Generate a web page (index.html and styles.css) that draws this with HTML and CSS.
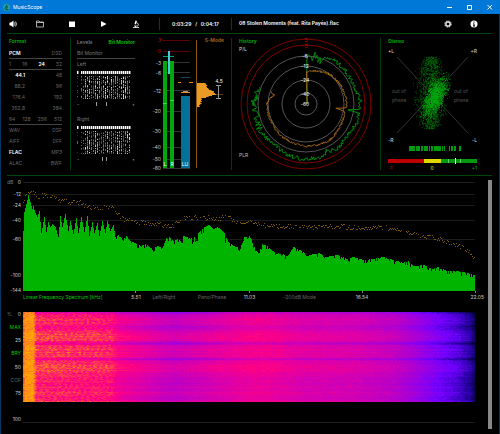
FILE: index.html
```html
<!DOCTYPE html>
<html lang="en">
<head>
  <meta charset="UTF-8">
  <meta name="viewport" content="width=device-width, initial-scale=1.0">
  <title>MusicScope</title>
  <link rel="stylesheet" href="styles.css">
</head>
<body>
  <div class="window">
    <header class="titlebar">
      <svg class="logo" viewBox="0 0 16 16"><circle cx="8" cy="8" r="8" fill="#1fa59a"/><path d="M3 10l3-1 2-6 2 4-2 3 3 3M5 13h7" fill="none" stroke="#083c50" stroke-width="2"/></svg>
      <h1>MusicScope</h1>
      <button class="win-btn" aria-label="Minimize"><svg viewBox="0 0 6 6"><path d="M0 3.500h5"/></svg></button>
      <button class="win-btn" aria-label="Maximize"><svg viewBox="0 0 6 6"><path d="M.5 1.500h4v4h-4z"/></svg></button>
      <button class="win-btn" aria-label="Close"><svg viewBox="0 0 6 6"><path d="M.5 1l4.500 4.500M5 1L.5 5.500"/></svg></button>
    </header>

    <main>
      <div class="toolbar">
        <button class="tool tool-first" aria-label="Volume"><svg viewBox="0 0 16 16"><path d="M1 5h3l5-4v14l-5-4H1z" fill="#fff"/><path d="M11 5q2 3 0 6M13 3q4 5 0 10" fill="none" stroke="#fff" stroke-width="1.500"/></svg></button>
        <button class="tool" aria-label="Open"><svg viewBox="0 0 16 16"><path d="M1 14V2h5l2 2h7v10zM1 5h14" fill="none" stroke="#ddd" stroke-width="1.500"/></svg></button>
        <button class="tool" aria-label="Stop"><svg viewBox="0 0 16 16"><path d="M2 3h12v11H2z" fill="#fff"/></svg></button>
        <button class="tool" aria-label="Play"><svg viewBox="0 0 16 16"><path d="M2 2l11 6-11 6z" fill="#fff"/></svg></button>
        <button class="tool" aria-label="Analyze"><svg viewBox="0 0 16 16"><path d="M7 1l3 1-2 7-3-1z" fill="#fff"/><path d="M10 5q5 3 1 8M2 15h12M4 12h6M7 12v3" fill="none" stroke="#fff" stroke-width="1.600"/></svg></button>
        <p class="time">0:03:29 &nbsp; / &nbsp; 0:04:17</p>
        <p class="file">08 Stolen Moments (feat. Rita Payés).flac</p>
        <button class="tool tool-small" aria-label="Settings"><svg viewBox="0 0 16 16"><circle cx="8" cy="8" r="5.500" fill="none" stroke="#ddd" stroke-width="3.500" stroke-dasharray="2.800 1.520"/><circle cx="8" cy="8" r="4" fill="none" stroke="#ddd" stroke-width="2.500"/></svg></button>
        <button class="tool tool-small" aria-label="Info"><svg viewBox="0 0 16 16"><circle cx="8" cy="8" r="7" fill="#fff"/><path d="M8 3v2.500M6.500 7.500H8V12M6 12h4" fill="none" stroke="#000" stroke-width="2"/></svg></button>
      </div>

      <div class="panels">
        <section class="panel format">
          <h2>Format</h2>
          <ul class="pair line"><li class="on">PCM</li><li>DSD</li></ul>
          <ul class="pair line"><li>1</li><li>16</li><li class="on">24</li><li>32</li></ul>
          <ul class="pair rate"><li class="on">44.1</li><li>48</li></ul>
          <ul class="pair rate"><li>88.2</li><li>96</li></ul>
          <ul class="pair rate"><li>176.4</li><li>192</li></ul>
          <ul class="pair rate"><li>352.8</li><li>384</li></ul>
          <ul class="pair line"><li>64</li><li>128</li><li>256</li><li>512</li></ul>
          <ul class="pair"><li>WAV</li><li>DSF</li></ul>
          <ul class="pair"><li>AIFF</li><li>DFF</li></ul>
          <ul class="pair"><li class="on">FLAC</li><li>MP3</li></ul>
          <ul class="pair"><li>ALAC</li><li>BWF</li></ul>
        </section>

        <section class="panel levels">
          <div class="tabs"><button>Levels</button><button class="green">Bit Monitor</button></div>
          <p class="line">Bit Monitor</p>
          <p>Left</p>
          <canvas class="bits" width="58" height="29"></canvas>
          <svg class="bit-ticks" viewBox="0 0 58 11"><text x="0" y="5">-</text><path d="M19.500 3v4M29.500 3v4"/><text x="58" y="5" text-anchor="end">+</text></svg>
          <p>Right</p>
          <canvas class="bits" width="58" height="29"></canvas>
          <svg class="bit-ticks" viewBox="0 0 58 11"><text x="0" y="5">-</text><path d="M25.500 3v4M29.500 3v4"/><text x="58" y="5" text-anchor="end">+</text></svg>
        </section>

        <section class="panel meter">
          <button class="s-mode">S-Mode</button>
          <svg id="meter" viewBox="0 0 82 138">
            <g class="crisp">
              <path d="M13 4.500h27M13 15.500h27" stroke="#5c0000"/>
              <path d="M13 26.500h27M13 36.500h27M13 54.500h27M13 75.500h27M13 95.500h27M13 111.500h27M13 123.500h27M13 132.500h27" stroke="#333"/>
              <path d="M13 25h4v107h-4zM20 25h4v107h-4z" fill="#00a80c"/>
              <path d="M13 67.500h4M20 64.500h4" stroke="#3ce53c"/>
              <path d="M13 20.500h11" stroke="#00a060"/>
              <path d="M18 15h2v23h-2z" fill="#4cc8e0"/>
              <path d="M31 60h9v72h-9z" fill="#03709a"/>
              <path d="M31 41.500h9" stroke="#07506e"/>
              <path d="M33 55.500h5" stroke="#999"/>
              <path d="M31 56.500h9M28 46.500h3M39 46.500h4" stroke="#e58d1a"/>
              <path d="M46.500 4v128" stroke="#8f5c12"/>
              <path d="M65 58.500h8" stroke="#5c3b0c"/>
              <path d="M66 49.500h5M66 62.500h5M68.500 49v14" stroke="#999"/>
            </g>
            <path id="histogram" fill="#eb9a26"/>
            <text x="69" y="45" text-anchor="middle" fill="#fff">4.5</text>
            <text x="15" y="128" text-anchor="middle" fill="#fff">L</text>
            <text x="22" y="128" text-anchor="middle" fill="#fff">R</text>
            <text x="35" y="128" text-anchor="middle" fill="#fff">LU</text>
          </svg>
        </section>

        <section class="panel history">
          <h2 class="over">History</h2>
          <svg id="history" viewBox="0 0 149 138">
            <g fill="none">
              <circle cx="74" cy="68" r="65" stroke="#820000"/>
              <circle cx="74" cy="68" r="59" stroke="#820000"/>
              <circle cx="74" cy="68" r="48" stroke="#555"/>
              <circle cx="74" cy="68" r="38" stroke="#555"/>
              <circle cx="74" cy="68" r="24" stroke="#555"/>
              <circle cx="74" cy="68" r="11" stroke="#555"/>
              <path id="trace-peak" stroke="#008c0c"/>
              <path id="trace-lufs" stroke="#a86a18"/>
            </g>
            <text x="7" y="13" fill="#ddd">P/L</text>
            <text x="7" y="119" fill="#bbb">PLR</text>
          </svg>
        </section>

        <section class="panel stereo">
          <h2 class="over">Stereo</h2>
          <svg id="stereo" viewBox="0 0 111 138">
            <path d="M16 21l71 76M87 21L16 97" stroke="#333"/>
            <path id="cloud-dim" stroke="#006a08"/>
            <path id="cloud" stroke="#00a810"/>
            <g class="crisp">
              <path id="balance" stroke="#009a10"/>
              <path d="M7 123h36v4H7z" fill="#c00000"/>
              <path d="M43 123h17v4H43z" fill="#dcd800"/>
              <path d="M60 123h36v4H60z" fill="#009a10"/>
              <path d="M67.500 123v4M79.500 123v4" stroke="#6c6"/>
              <path d="M74.500 122v6" stroke="#fff"/>
            </g>
            <g fill="#ddd"><text x="7" y="15">+L</text><text x="96" y="15" text-anchor="end">+R</text><text x="7" y="104">-R</text><text x="96" y="104" text-anchor="end">-L</text></g>
            <g fill="#505050"><text x="11" y="55">out of</text><text x="11" y="64">phase</text><text x="73" y="55">out of</text><text x="73" y="64">phase</text></g>
            <text x="7" y="132" fill="#e00000">-1</text><text x="51" y="132" text-anchor="middle" fill="#f0ec00">0</text><text x="96" y="132" text-anchor="end" fill="#00b810">+1</text>
          </svg>
        </section>
      </div>

      <div class="lower">
        <div class="charts">
          <svg id="spectrum" viewBox="0 0 477 117">
            <path class="crisp" d="M16 6.500h452M16 18.500h452M16 29.500h452M16 44.500h452M16 63.500h452" stroke="#1c1c1c"/>
            <path id="spectrum-max" class="crisp" stroke="#80590f"/>
            <path id="spectrum-now" class="crisp" fill="#00b400"/>
            <path class="crisp" d="M128.500 115v2M242.500 115v2M355.500 115v2M468.500 115v2" stroke="#888"/>
            <text x="0" y="6" fill="#777">dB</text>
          </svg>
          <div class="legend">
            <p class="green">Linear Frequency Spectrum [kHz]</p>
            <p class="tick">5.51</p>
            <button>Left/Right</button>
            <button>Pano/Phase</button>
            <p class="tick">11.03</p>
            <button>-200dB Mode</button>
            <p class="tick">16.54</p>
            <p class="tick last">22.05</p>
          </div>
          <div class="spectrogram">
            <div class="axis">
              <p><span>%</span>0</p>
              <button class="green">MAX</button>
              <p>25</p>
              <button class="green">BRY</button>
              <p>50</p>
              <button>COF</button>
              <p>75</p>
              <p>&nbsp;</p>
              <p>100</p>
            </div>
            <div class="plot"><canvas id="spectrogram" width="452" height="90"></canvas></div>
          </div>
        </div>
        <div class="scrollbar"></div>
      </div>
    </main>
  </div>
  <script src="script.js"></script>
</body>
</html>
```

FILE: styles.css
```css
* {
  box-sizing: border-box;
  margin: 0;
  padding: 0;
}
body {
  background: #000;
  color: #ccc;
  font: 5px/7px Inter, "Open Sans", sans-serif;
}
h1, h2 {
  font-size: inherit;
}
ul {
  list-style: none;
}
button {
  border: 0;
  background: none;
  color: inherit;
  font: inherit;
  cursor: pointer;
}
svg, canvas {
  display: block;
}
svg text {
  dominant-baseline: central;
}
.crisp {
  shape-rendering: crispEdges;
}
.green {
  color: #00c800;
}

.window {
  min-height: 100vh;
  border: 1px solid #00365f;
  border-top: 0;
}

/* title bar */
.titlebar {
  display: flex;
  align-items: center;
  height: 14px;
  padding-left: 3px;
  margin: 0 -1px;
  background: #0078d7;
  color: #fff;
}
.titlebar h1 {
  flex: 1;
  font-weight: normal;
}
.logo {
  width: 7px;
  margin-right: 3px;
}
.win-btn {
  width: 20px;
  height: 14px;
}
.win-btn svg {
  width: 6px;
  margin: auto;
  fill: none;
  stroke: #fff;
  stroke-width: 1;
}

main {
  padding: 0 7px 0 6px;
}

/* toolbar */
.toolbar {
  display: flex;
  align-items: center;
  height: 20px;
  border-bottom: 1px solid #004808;
  color: #fff;
  font-weight: 600;
}
.tool {
  width: 32px;
  height: 19px;
}
.tool svg {
  width: 8px;
  margin: auto;
}
.tool-first {
  width: 17px;
}
.tool-first svg {
  margin-left: 2px;
}
.tool-small {
  width: 26px;
}
.tool-small:last-child {
  margin-right: 5px;
}
.time {
  width: 73px;
  margin-left: 7px;
  border: solid #004808;
  border-width: 0 1px;
  line-height: 12px;
  text-align: center;
  white-space: nowrap;
}
.file {
  flex: 1;
  padding-left: 7px;
  white-space: nowrap;
}

/* upper panels */
.panels {
  display: grid;
  grid-template-columns: 64fr 79fr 82fr 149fr 111fr;
  padding: 2px 0 1px;
  border-bottom: 1px solid #004808;
}
.panel {
  position: relative;
  line-height: 11px;
}
.panel h2 {
  height: 12px;
  color: #00a00c;
}
.panel .over {
  position: absolute;
  left: 7px;
}
.panel svg {
  width: 100%;
}
.format::after, .meter::after, .history::after {
  content: "";
  position: absolute;
  top: 2px;
  right: 0;
  bottom: 4px;
  border-right: 1px solid #003c08;
}
.format {
  padding: 0 9px 0 2px;
  color: #666;
}
.pair {
  display: flex;
  justify-content: space-between;
  height: 11px;
}
.line {
  border-bottom: 1px solid #444;
}
.rate li:first-child {
  width: 16px;
  text-align: right;
}
.on {
  color: #fff;
  font-weight: 600;
}
.levels {
  padding: 0 15px 0 6px;
  color: #777;
}
.levels p {
  height: 11px;
}
.tabs {
  display: flex;
  justify-content: space-between;
  height: 12px;
  line-height: 11px;
  font-weight: 600;
}
.bits {
  width: 100%;
}
.bit-ticks {
  margin-bottom: 4px;
  fill: #aaa;
}
.bit-ticks path {
  stroke: #999;
}
.s-mode {
  position: absolute;
  right: 8px;
  line-height: 9px;
  color: #a86a18;
  font-weight: 600;
}

/* spectrum and spectrogram */
.lower {
  display: flex;
  gap: 4px;
}
.charts {
  flex: 1;
}
.scrollbar {
  width: 4px;
  margin: 4px 0 5px;
  background: #888;
}
.legend {
  display: grid;
  grid-template-columns: 104fr 18fr 38fr 58fr 17fr 83fr 42fr 101fr;
  margin-left: 16px;
  color: #666;
  line-height: 8px;
  white-space: nowrap;
}
.tick {
  color: #ccc;
  text-align: center;
}
.last {
  text-align: right;
}
.spectrogram {
  display: flex;
  gap: 2px;
  margin: 10px 9px 11px 0;
}
.axis {
  display: flex;
  flex-direction: column;
  justify-content: space-between;
  width: 14px;
  height: 112px;
  text-align: right;
}
.axis button {
  text-align: right;
  color: #666;
}
.axis .green {
  color: #00c800;
}
.axis span {
  float: left;
  color: #777;
}
.plot {
  flex: 1;
  height: 112px;
  padding-top: 1px;
  border-bottom: 1px solid #1c1c1c;
}
.plot canvas {
  width: 100%;
}
```

FILE: script.js
```js
var seed = 7;
function rnd() {
  seed = (seed * 16807) % 2147483647;
  return seed / 2147483647;
}

// piecewise linear curve through a flat list x0, y0, x1, y1, ...
function curve(pts, x) {
  for (var i = 0; i < pts.length - 2; i += 2) {
    if (x <= pts[i + 2]) {
      return pts[i + 1] + (pts[i + 3] - pts[i + 1]) * (x - pts[i]) / (pts[i + 2] - pts[i]);
    }
  }
  return pts[pts.length - 1];
}

function setPath(id, d) {
  document.getElementById(id).setAttribute('d', d);
}

function addText(id, x, y, text, fill, anchor) {
  var el = document.createElementNS('http://www.w3.org/2000/svg', 'text');
  el.setAttribute('x', x);
  el.setAttribute('y', y);
  el.setAttribute('fill', fill);
  el.setAttribute('text-anchor', anchor);
  el.textContent = text;
  document.getElementById(id).appendChild(el);
}

// scales
[[3, 4], [0, 15], [-3, 27], [-6, 37], [-12, 55], [-20, 75], [-30, 95], [-40, 111], [-50, 123], [-60, 132]].forEach(function (s) {
  addText('meter', 11, s[1], s[0], s[0] < 0 ? '#ccc' : '#d00000', 'end');
});
[[3, 4], [0, 10], [-6, 20], [-12, 30], [-24, 44], [-40, 58], [-60, 68]].forEach(function (s) {
  addText('history', s[0] < 0 ? 73 : 74, s[1], s[0], s[0] < 0 ? '#fff' : '#e00000', 'middle');
});
[[0, 6], [-12, 18], [-24, 29], [-40, 44], [-60, 63], [-100, 99], [-144, 114]].forEach(function (s) {
  addText('spectrum', 14, s[1], s[0], '#ccc', 'end');
});

// bit monitor
document.querySelectorAll('.bits').forEach(function (c) {
  var g = c.getContext('2d');
  for (var x = 0; x < 53; x += 2) {
    if (x === 2) continue;
    var glow = 0.4 + rnd() * 0.6;
    g.fillStyle = '#777';
    g.fillRect(x, 1, 2, 3);
    g.fillStyle = '#fff';
    g.fillRect(x, 1, 1, 3);
    for (var y = 6; y < 29; y++) {
      var l = (40 + rnd() * 215) * glow;
      g.fillStyle = 'rgb(' + l + ',' + l + ',' + l + ')';
      if (rnd() < (x < 8 ? 0.4 : 0.75)) g.fillRect(x, y, 1, 1);
    }
  }
});

// loudness histogram
var d = 'M47 47', y;
var hist = [47, 9, 49, 10, 52, 11, 55, 17, 57, 18, 58, 19, 59, 14, 61, 9, 62, 5, 66, 4, 68, 4, 71, 1];
for (y = 47; y < 71; y++) {
  d += 'H' + (47 + Math.max(1, curve(hist, y) + rnd() * 2 - 1)) + 'v1';
}
setPath('histogram', d + 'H47z');

// history traces, angle in degrees clockwise from the top
function trace(id, pts, noise) {
  var d = 'M75 68';
  for (var a = 1; a < 291; a += 1) {
    var n = typeof noise === 'function' ? noise(a) : noise;
    var r = curve(pts, a) + (rnd() - 0.5) * n;
    var t = a * Math.PI / 180;
    d += 'L' + (74 + r * Math.sin(t)).toFixed(1) + ' ' + (68 - r * Math.cos(t)).toFixed(1);
  }
  setPath(id, d);
}
trace('trace-peak', [0, 48, 20, 48, 30, 52, 60, 51, 75, 52, 85, 54, 96, 54, 98, 42, 100, 54, 110, 54, 125, 52, 145, 54, 154, 53, 156, 48, 159, 55, 180, 55, 200, 54, 220, 51, 240, 53, 260, 51, 275, 52, 290, 48],
  function (a) { return a < 20 ? 11 : a > 240 ? 7 : 4; });
trace('trace-lufs', [0, 32, 8, 33, 20, 35, 40, 38, 75, 40, 95, 41, 98, 31, 101, 39, 113, 40, 146, 43, 180, 42, 203, 41, 238, 39, 270, 39, 277, 37, 286, 33, 291, 39], 2);

// goniometer
function cloud(id, n, fn) {
  var d = '';
  while (n--) {
    var p = fn();
    d += 'M' + p[0].toFixed(1) + ' ' + p[1].toFixed(1) + 'h.7';
  }
  setPath(id, d);
}
function gauss() {
  return rnd() + rnd() + rnd() - 1.5;
}
cloud('cloud-dim', 1300, function () {
  var v = (rnd() - 0.5) * 72, w = 15 * Math.sqrt(1 - v * v / 1500);
  return [50 + gauss() * w, 57 + v];
});
cloud('cloud', 1100, function () {
  var v = gauss() * 18;
  return [54 + gauss() * 9 - v * 0.35, 61 + v];
});
d = '';
for (var i = 28; i < 80; i++) {
  if (rnd() < (i < 64 ? 0.72 : 0.3)) d += 'M' + (i + 0.5) + ' 110v5';
}
setPath('balance', d);

// frequency spectrum
var now = [0, 55, 1, 36, 3, 28, 5, 19, 7, 26, 9, 33, 10, 30, 12, 37, 14, 41, 16, 35, 18, 57, 21, 41, 23, 56, 25, 46, 27, 51, 29, 48,
  32, 51, 35, 61, 37, 40, 39, 51, 42, 38, 45, 55, 47, 45, 50, 58, 53, 42, 55, 57, 58, 41, 61, 56, 64, 40, 66, 60, 69, 46, 71, 57,
  74, 47, 76, 60, 79, 45, 82, 57, 84, 45, 87, 55, 90, 49, 92, 61, 95, 59, 99, 63, 103, 60, 107, 65, 112, 67, 117, 70, 122, 68,
  129, 73, 134, 70, 139, 72, 143, 62, 147, 61, 150, 65, 154, 63, 159, 66, 160, 60, 164, 61, 167, 63, 172, 60, 177, 55, 181, 51,
  186, 49, 190, 53, 194, 51, 197, 53, 201, 57, 205, 66, 210, 70, 217, 72, 221, 61, 227, 60, 230, 70, 235, 77, 239, 68, 244, 70,
  247, 73, 252, 77, 259, 78, 264, 80, 267, 76, 270, 71, 275, 73, 280, 76, 284, 80, 290, 78, 297, 77, 302, 81, 314, 79, 324, 83,
  330, 81, 340, 84, 350, 83, 360, 81, 370, 84, 377, 86, 385, 85, 390, 90, 400, 89, 409, 93, 415, 91, 424, 95, 434, 95, 444, 97, 452, 99];
var max = [0, 28, 2, 20, 4, 16, 9, 15, 14, 20, 27, 19, 37, 25, 42, 20, 46, 28, 50, 23, 60, 28, 70, 31, 89, 31, 94, 37, 102, 44, 110, 45,
  127, 47, 149, 50, 160, 42, 177, 41, 194, 42, 204, 40, 214, 45, 227, 45, 234, 47, 247, 50, 260, 50, 280, 51, 310, 50, 337, 51,
  360, 51, 380, 55, 400, 59, 417, 63, 430, 67, 440, 72, 447, 77, 452, 84];
d = 'M16 115';
var dots = '';
for (var x = 0; x < 452; x++) {
  var drop = x > 92 && rnd() < 0.35 ? rnd() * (x > 165 && x < 205 ? 10 : 4) : 0;
  d += 'V' + Math.round(curve(now, x) + drop) + 'h1';
  if (rnd() < 0.85) {
    dots += 'M' + (x + 16) + ' ' + (Math.round(curve(max, x) + (rnd() - 0.5) * 5) + 0.5) + 'h1';
  }
}
setPath('spectrum-now', d + 'V115z');
setPath('spectrum-max', dots);

// spectrogram
var stops = [[0, 0, 0, 50], [0.15, 40, 0, 165], [0.3, 112, 0, 255], [0.4, 150, 0, 230], [0.5, 184, 0, 200],
  [0.6, 220, 0, 170], [0.7, 255, 0, 130], [0.8, 255, 50, 90], [0.9, 255, 130, 30], [1, 255, 170, 0]];
var level = [0, 0.85, 2, 0.95, 10, 0.95, 13, 0.78, 50, 0.76, 88, 0.74, 95, 0.67, 115, 0.62, 150, 0.54, 190, 0.6, 225, 0.65,
  245, 0.65, 280, 0.6, 330, 0.58, 370, 0.52, 390, 0.44, 415, 0.32, 435, 0.23, 448, 0.12, 452, 0.04];
var rows = [0, -0.14, 2, -0.04, 6, -0.01, 12, 0, 15, -0.07, 18, 0.02, 26, 0.05, 28, 0.03, 31, -0.12, 33, 0.03, 40, 0.03,
  44, 0.02, 47, -0.13, 49, 0.04, 58, 0.06, 62, -0.02, 75, -0.02, 82, 0.01, 86, -0.04, 89, 0.02];
var ctx = document.getElementById('spectrogram').getContext('2d');
var img = ctx.createImageData(452, 90);
for (y = 0; y < 90; y++) {
  var shift = curve(rows, y) + (rnd() - 0.5) * 0.06;
  var n = 0;
  for (x = 0; x < 452; x++) {
    if (x % 2 === 0) n = (rnd() - 0.5) * (x < 90 ? 0.12 : 0.06);
    var v = curve(level, x) + shift * (x < 12 ? 0.2 : x > 200 ? 0.7 : 1) + n;
    if (x > 12 && x < 90) v += Math.sin(x * 1.15) * 0.03 * Math.sin(y / 2);
    v = Math.min(1, Math.max(0, v));
    var k = 1;
    while (stops[k][0] < v) k++;
    var a = stops[k - 1], b = stops[k], f = (v - a[0]) / (b[0] - a[0]);
    var p = (y * 452 + x) * 4;
    for (i = 0; i < 3; i++) img.data[p + i] = a[i + 1] + (b[i + 1] - a[i + 1]) * f;
    img.data[p + 3] = 255;
  }
}
ctx.putImageData(img, 0, 0);
```
